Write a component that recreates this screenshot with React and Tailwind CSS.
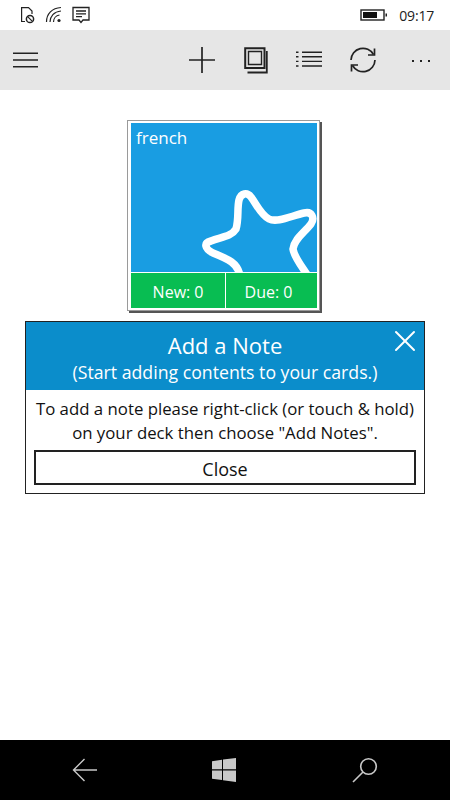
import { X } from 'lucide-react'

const FONT = { fontFamily: '"Open Sans", "Noto Sans", sans-serif' }

function StatusBar() {
  return (
    <div className="h-[30px] bg-white flex items-center text-[#222]">
      <div className="flex items-center gap-[9px] pl-[20px]">
        <svg width="16" height="18" viewBox="0 0 16 18" fill="none" stroke="#222" strokeWidth="1.2">
          <path d="M5 15.5H1.6V1.6H8.5L12 5V8" />
          <circle cx="10" cy="13" r="3.6" strokeWidth="1.5" />
          <path d="M7.6 10.6L12.4 15.4" />
        </svg>
        <svg width="18" height="18" viewBox="0 0 18 18" fill="none" stroke="#222" strokeWidth="1.2">
          <path d="M1.5 16C1.5 8 7 2 16 1.5" />
          <path d="M5 16C5 10.5 9 5.5 16 5" />
          <path d="M8.5 16C8.5 12.5 11 9.5 14.5 9" />
          <circle cx="14" cy="14.5" r="1.6" fill="#222" stroke="none" />
        </svg>
        <svg width="18" height="18" viewBox="0 0 18 18" fill="none" stroke="#222" strokeWidth="1.3">
          <path d="M1 1.5H17V14H11L9 16.5L7 14H1Z" />
          <path d="M4 5H14M4 7.8H14M4 10.6H10" />
        </svg>
      </div>
      <div className="ml-auto flex items-center pr-[16px]">
        <svg width="28" height="12" viewBox="0 0 28 12" fill="none">
          <rect x="1" y="1" width="23" height="10" stroke="#222" strokeWidth="1.4" />
          <rect x="3" y="3" width="14" height="6" fill="#111" />
          <rect x="25.5" y="4.5" width="1.5" height="3" fill="#222" />
        </svg>
        <span className="ml-[11px] text-[14px] tracking-[-0.2px]">09:17</span>
      </div>
    </div>
  )
}

function Toolbar() {
  return (
    <div className="h-[60px] bg-[#e6e6e6] flex items-center text-[#222]">
      <svg className="ml-[13px]" width="25" height="16" viewBox="0 0 25 16" stroke="#222" strokeWidth="1.6">
        <path d="M0 1.2H25M0 8H25M0 14.8H25" />
      </svg>
      <div className="ml-auto flex items-center mr-[20px]">
        <svg className="mr-[29px]" width="26" height="26" viewBox="0 0 26 26" stroke="#222" strokeWidth="1.7">
          <path d="M0 13H26M13 0V26" />
        </svg>
        <svg className="mr-[28px]" width="24" height="27" viewBox="0 0 24 27" fill="none" stroke="#222">
          <path d="M1.2 1.2H20.5V21H1.2Z" strokeWidth="2" />
          <path d="M4.5 4.5H17.5V17.5H4.5Z" strokeWidth="1.4" />
          <path d="M22.8 4V25.5H3.5" strokeWidth="1.8" />
        </svg>
        <svg className="mr-[26px]" width="27" height="18" viewBox="0 0 27 18" stroke="#222">
          <path d="M6 1.2H26M6 5.8H26M6 10.4H26M6 15H26" strokeWidth="1.4" />
          <path d="M0 1.2H2.5M0 5.8H2.5M0 10.4H2.5M0 15H2.5" strokeWidth="1.4" />
        </svg>
        <svg className="mr-[35px]" width="28" height="28" viewBox="0 0 28 28" fill="none" stroke="#222" strokeWidth="1.7">
          <path d="M2 14A12 12 0 0 1 24.5 8.5" />
          <path d="M25.5 2.5V9H19" />
          <path d="M26 14A12 12 0 0 1 3.5 19.5" />
          <path d="M2.5 25.5V19H9" />
        </svg>
        <div className="flex gap-[6px] mt-[2px]">
          <span className="w-[2px] h-[2px] bg-[#222]" />
          <span className="w-[2px] h-[2px] bg-[#222]" />
          <span className="w-[2px] h-[2px] bg-[#222]" />
        </div>
      </div>
    </div>
  )
}

function DeckCard() {
  return (
    <div className="w-[193px] ml-[127px] mt-[30px] border border-[#9a9a9a] bg-white pt-[2px] pb-[2px] pl-[3px] pr-[2px] shadow-[2px_2px_0_#555]">
      <div className="relative h-[149px] bg-[#199de2] overflow-hidden text-white">
        <span className="absolute left-[5px] top-[2px] text-[17px]">french</span>
        <svg className="absolute inset-0" width="186" height="149" viewBox="0 0 186 149" fill="none" stroke="#fff" strokeWidth="7.5">
          <path d="M109 153C107 140 97 136 82 130C74 126 72 120 80 118C90 114 100 114 105 106C108 96 106 85 108 77C110 70 116 69 120 74C126 82 130 92 138 96C146 100 160 93 173 90C181 88 184 95 180 101C174 109 163 116 162 126C163 134 170 142 177 153" />
        </svg>
      </div>
      <div className="mt-[1px] h-[35px] flex bg-[#08bd52] text-white text-[16px] pt-[3px]">
        <div className="w-[94px] shrink-0 flex items-center justify-center gap-[4px]"><span>New:</span><span>0</span></div>
        <div className="w-[1px] -mt-[3px] bg-white" />
        <div className="flex-1 flex items-center justify-center gap-[4px] pr-[6px]"><span>Due:</span><span>0</span></div>
      </div>
    </div>
  )
}

function NoteDialog() {
  return (
    <div className="mx-[25px] mt-[10px] border border-[#222] bg-white">
      <div className="relative h-[68px] bg-[#0b8dcb] text-white text-center">
        <div className="pt-[7px] text-[22px] leading-[32px]">Add a Note</div>
        <div className="text-[17.7px] leading-[22px]">(Start adding contents to your cards.)</div>
        <X size={36} strokeWidth={2} absoluteStrokeWidth className="absolute right-[1px] top-[1px]" />
      </div>
      <div className="pt-[7px] px-[8px] pb-[8px] text-center text-[#111]">
        <p className="text-[16.8px] leading-[24px] whitespace-nowrap">To add a note please right-click (or touch &amp; hold)<br />on your deck then choose "Add Notes".</p>
        <button className="block w-full h-[35px] mt-[5px] pt-[3px] border-2 border-[#222] text-[18px]">Close</button>
      </div>
    </div>
  )
}

function NavBar() {
  return (
    <div className="mt-auto h-[60px] bg-black flex items-center pl-[72px]">
      <svg width="26" height="24" viewBox="0 0 26 24" fill="none" stroke="#c8c8c8" strokeWidth="1.4">
        <path d="M25 12H1.5M12.5 1L1.5 12L12.5 23" />
      </svg>
      <svg className="ml-[114px]" width="24" height="24" viewBox="0 0 24 24" fill="#c8c8c8">
        <path d="M0 3.2L10 1.8V11.3H0ZM11 1.6L24 0V11.3H11ZM0 12.5H10V22L0 20.7ZM11 12.5H24V24L11 22.2Z" />
      </svg>
      <svg className="ml-[116px]" width="26" height="26" viewBox="0 0 26 26" fill="none" stroke="#c8c8c8" strokeWidth="1.6">
        <circle cx="16.5" cy="9.5" r="7.8" />
        <path d="M11 15L1 25" />
      </svg>
    </div>
  )
}

export default function App() {
  return (
    <div className="w-[450px] h-[800px] bg-white flex flex-col overflow-hidden" style={FONT}>
      <StatusBar />
      <Toolbar />
      <DeckCard />
      <NoteDialog />
      <NavBar />
    </div>
  )
}
